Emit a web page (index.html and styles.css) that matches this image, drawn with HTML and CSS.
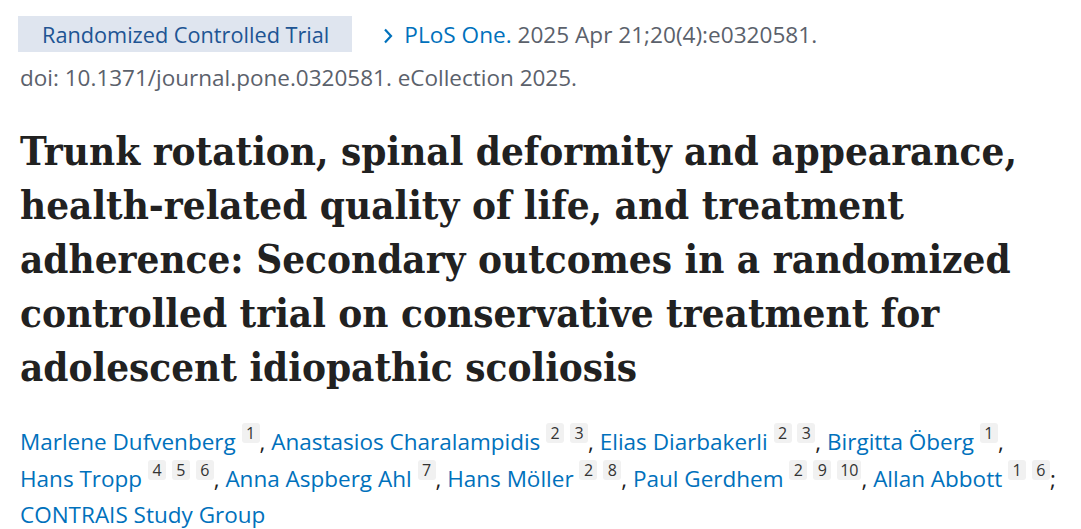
FILE: index.html
```html
<!DOCTYPE html>
<html lang="en">
<head>
<meta charset="utf-8">
<title>Trunk rotation, spinal deformity and appearance</title>
<link rel="stylesheet" href="styles.css">
</head>
<body>
<main class="article">
  <div class="meta-row">
    <span class="pub-type">Randomized Controlled Trial</span>
    <span class="citation"><svg class="chevron" viewBox="0 0 10 16" width="10" height="16" aria-hidden="true"><path d="M2 1.5 L8 8 L2 14.5" fill="none" stroke="#0071bc" stroke-width="2.2"/></svg><a class="journal" href="#">PLoS One.</a> 2025 Apr 21;20(4):e0320581.</span>
  </div>
  <div class="doi">doi: 10.1371/journal.pone.0320581. eCollection 2025.</div>
  <h1 class="title">Trunk rotation, spinal deformity and appearance, health-related quality of life, and treatment adherence: Secondary outcomes in a randomized controlled trial on conservative treatment for adolescent idiopathic scoliosis</h1>
  <div class="authors">
    <a href="#">Marlene Dufvenberg</a> <sup class="aff">1</sup>, <a href="#">Anastasios Charalampidis</a> <sup class="aff">2</sup> <sup class="aff">3</sup>, <a href="#">Elias Diarbakerli</a> <sup class="aff">2</sup> <sup class="aff">3</sup>, <a href="#">Birgitta Öberg</a> <sup class="aff">1</sup>, <a href="#">Hans Tropp</a> <sup class="aff">4</sup> <sup class="aff">5</sup> <sup class="aff">6</sup>, <a href="#">Anna Aspberg Ahl</a> <sup class="aff">7</sup>, <a href="#">Hans Möller</a> <sup class="aff">2</sup> <sup class="aff">8</sup>, <a href="#">Paul Gerdhem</a> <sup class="aff">2</sup> <sup class="aff">9</sup> <sup class="aff">10</sup>, <a href="#">Allan Abbott</a> <sup class="aff">1</sup> <sup class="aff">6</sup>; <a href="#">CONTRAIS Study Group</a>
  </div>
</main>
</body>
</html>
```

FILE: styles.css
```css
html, body {
  margin: 0;
  padding: 0;
  background: #ffffff;
}

body {
  font-family: "Open Sans", "Noto Sans", "Liberation Sans", sans-serif;
  color: #5b616b;
}

.article {
  padding: 16px 6px 0 18px;
}

.meta-row {
  display: flex;
  align-items: center;
  gap: 31px;
  height: 36px;
}

.pub-type {
  display: inline-flex;
  align-items: center;
  height: 36px;
  padding: 0 23px 0 24px;
  background: #dfe5ef;
  color: #205493;
  font-size: 21.7px;
}

.citation {
  font-size: 22.6px;
  color: #5b616b;
}

.chevron {
  display: inline-block;
  vertical-align: -1px;
  margin-right: 11px;
}

.journal {
  color: #0071bc;
  text-decoration: none;
}

.doi {
  margin-top: 10px;
  padding-left: 2px;
  font-size: 22.5px;
  line-height: 32px;
}

.title {
  margin: 30px 0 0 2px;
  font-family: "DejaVu Serif Condensed", "DejaVu Serif", "Liberation Serif", serif;
  font-stretch: condensed;
  font-weight: 700;
  font-size: 40px;
  line-height: 54px;
  color: #212121;
  max-width: 1030px;
}

.authors {
  margin: 29px 0 0 2px;
  max-width: 1038px;
  font-size: 22.5px;
  line-height: 36px;
  color: #212121;
}

.authors a {
  color: #0071bc;
  text-decoration: none;
}

.aff {
  display: inline-block;
  vertical-align: 11px;
  min-width: 18px;
  height: 20px;
  padding: 0 3px;
  box-sizing: border-box;
  border-radius: 3px;
  background: #f1f1f1;
  color: #333333;
  font-size: 16px;
  line-height: 20px;
  text-align: center;
}
```
